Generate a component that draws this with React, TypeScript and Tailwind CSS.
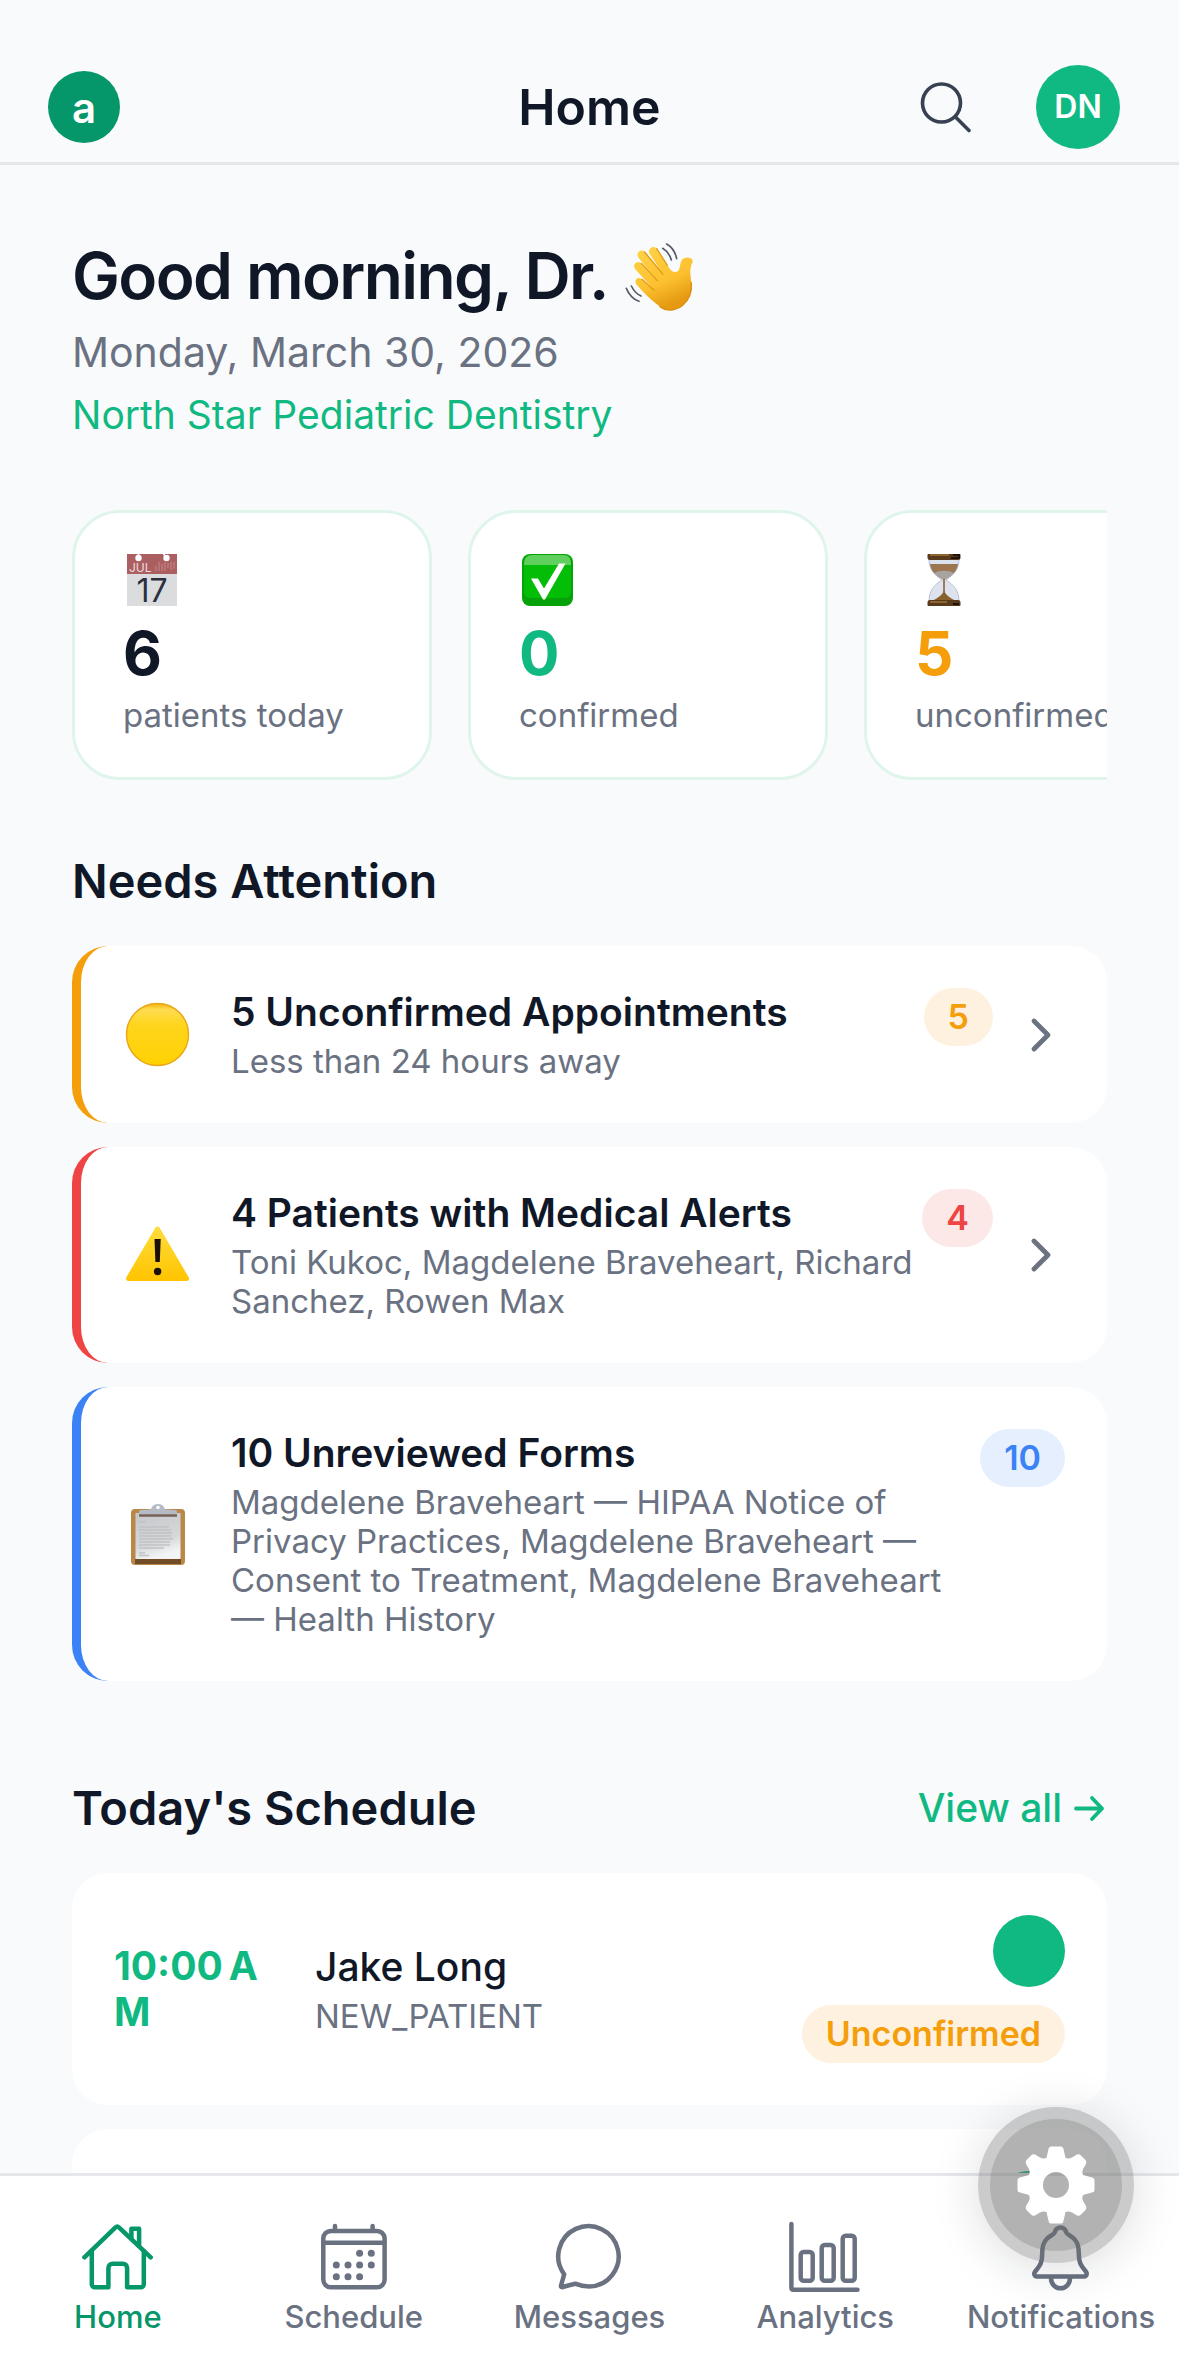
import type { ReactNode } from 'react'

function WaveIcon() {
  return (
    <svg viewBox="36 30 216 216" className="size-[72px]" aria-hidden="true">
      <defs>
        <linearGradient id="skin" x1="0" y1="0" x2="0.4" y2="1">
          <stop offset="0" stopColor="#ffd54a" />
          <stop offset="0.65" stopColor="#fcc02e" />
          <stop offset="1" stopColor="#e59a12" />
        </linearGradient>
      </defs>
      <path
        d="M112 70C106 54 126 44 134 56L170 112C177 124 186 129 195 125C204 121 203 106 207 95C211 82 228 79 238 86C246 92 240 100 237 108C233 122 236 140 238 158C240 184 234 208 212 226C192 242 166 246 144 230C120 212 96 190 74 164C64 150 78 138 90 148L124 178L70 118C58 104 76 88 88 100L134 150L80 84C68 68 88 54 98 66L148 126Z"
        fill="url(#skin)"
      />
      <path d="M98 66L153 133M134 56L166 106M88 100L136 152M90 148L126 181" fill="none" stroke="#e39a1a" strokeWidth="4" strokeLinecap="round" />
      <path d="M238 158C240 184 234 208 212 226C192 242 166 246 144 230" fill="none" stroke="#dc8d10" strokeWidth="4" strokeLinecap="round" />
      <path d="M164 42C178 50 190 66 194 86M152 55C164 62 174 76 178 90M58 168C64 180 74 192 87 198M43 175C50 192 64 208 81 214" fill="none" stroke="#555b66" strokeWidth="5" strokeLinecap="round" />
    </svg>
  )
}

function CalendarEmoji() {
  return (
    <svg viewBox="-1 1 54 52" className="h-[52px] w-[54px]" aria-hidden="true">
      <path d="M3 0H54V54H3Z" fill="#dbdcde" />
      <path d="M3 0H54V21H3Z" fill="#ab5f60" />
      <circle cx="14.500" cy="5" r="3.200" fill="#fff" />
      <circle cx="42.500" cy="5" r="3.200" fill="#fff" />
      <path d="M14.500 0V4M39 0L42.500 5" stroke="#fff" strokeWidth="1.600" />
      <text x="5" y="19" fontSize="12" fill="#eedddd" fontFamily="Inter, sans-serif">JUL</text>
      <path d="M32 13v5M35 9v9M38 11v7M41 9v9M44 10v5M47 9v8M50 9v7" stroke="#c08383" strokeWidth="1.200" />
      <text x="28" y="48.500" textAnchor="middle" fontSize="32" fill="#2b3040" fontFamily="Inter, sans-serif">17</text>
    </svg>
  )
}

function CheckEmoji() {
  return (
    <svg viewBox="-1 1 54 52" className="h-[52px] w-[54px]" aria-hidden="true">
      <rect x="2" y="1" width="51" height="52" rx="8" fill="#07a10a" />
      <rect x="4" y="2" width="47" height="43" rx="6" fill="#03bd06" />
      <path d="M4 12C4 5 7 2 13 2H43C49 2 51 6 51 12Z" fill="#5fcf5d" />
      <path d="M11 25.500H18L24 35.500L39 10.500H45.500L25 46.500H23Z" fill="#fff" />
    </svg>
  )
}

function HourglassEmoji() {
  return (
    <svg viewBox="-2 1 54 52" className="h-[52px] w-[54px]" aria-hidden="true">
      <path d="M12 6H42C42 17 37 21 29 27C37 32 42 38 42 48H12C12 38 17 32 25 27C17 21 12 17 12 6Z" fill="#dde3ee" stroke="#b9c2d3" strokeWidth="1" />
      <path d="M13 11H41C40 18 36 22 28 26.500H26C18 22 14 18 13 11Z" fill="#9b7650" />
      <path d="M17 20C20 23 24 25 27 27C31 25 34 23 37 20C32 17 22 17 17 20Z" fill="#a9a3a0" />
      <path d="M27 26V42" stroke="#8a6238" strokeWidth="1.600" />
      <path d="M14 48C20 46 25 42 27 38C29 42 34 46 40 48Z" fill="#8a6030" />
      <rect x="10.500" y="0" width="33" height="7" rx="2.500" fill="#5a3a1c" />
      <rect x="10.500" y="47" width="33" height="7" rx="2.500" fill="#5a3a1c" />
      <path d="M13 2H32M13 49H30" stroke="#a3713a" strokeWidth="1.500" />
      <path d="M36 2H42V5H34M36 51H42" stroke="#1f1209" strokeWidth="2" fill="none" />
    </svg>
  )
}

function YellowCircle() {
  return (
    <svg viewBox="0 0 72 72" className="size-[72px] shrink-0" aria-hidden="true">
      <defs>
        <linearGradient id="sun" x1="0" y1="0" x2="0" y2="1">
          <stop offset="0" stopColor="#f2b40c" />
          <stop offset="0.1" stopColor="#ffdc50" />
          <stop offset="0.35" stopColor="#ffd51c" />
          <stop offset="1" stopColor="#ffd103" />
        </linearGradient>
      </defs>
      <circle cx="34.500" cy="35.500" r="31" fill="url(#sun)" stroke="#e9a616" strokeWidth="1.400" />
    </svg>
  )
}

function WarningEmoji() {
  return (
    <svg viewBox="0 0 72 72" className="size-[72px] shrink-0" aria-hidden="true">
      <defs>
        <linearGradient id="warn" x1="0" y1="0" x2="0" y2="1">
          <stop offset="0" stopColor="#ffdd3c" />
          <stop offset="1" stopColor="#ffc400" />
        </linearGradient>
      </defs>
      <path d="M32.500 8.500C33.500 7 35.500 7 36.500 8.500L65.500 58C67 60.500 65.500 62 63.500 62H5.500C3.500 62 2.500 60.500 3.500 58Z" fill="url(#warn)" />
      <path d="M31.500 20H37.700L36.800 43H32.400Z" fill="#1a1005" />
      <circle cx="34.600" cy="52.500" r="3.700" fill="#1a1005" />
    </svg>
  )
}

function ClipboardEmoji() {
  return (
    <svg viewBox="0 0 72 72" className="size-[72px] shrink-0" aria-hidden="true">
      <defs>
        <linearGradient id="paper" x1="0" y1="0" x2="0.3" y2="1">
          <stop offset="0" stopColor="#c6c7ca" />
          <stop offset="0.7" stopColor="#d6d7d9" />
          <stop offset="1" stopColor="#f2f3f4" />
        </linearGradient>
      </defs>
      <rect x="8" y="11" width="54" height="56" rx="4" fill="#b98748" />
      <path d="M12 61H58V66H12Z" fill="#724c26" />
      <rect x="12.500" y="15" width="45" height="46" fill="url(#paper)" />
      <path d="M16 16V14C16 12.500 17 12 19 12L27 11.500C29 11 29 6 35 6C41 6 41 11 43 11.500L51 12C53 12 54 12.500 54 14V16Z" fill="#b5bac4" />
      <circle cx="35" cy="9.500" r="1.800" fill="#fff" />
      <path d="M16 17.500H54" stroke="#775f57" strokeWidth="2.400" />
      <path d="M16 24H23M16 29H46M16 32H48M16 35H49M16 38H48M16 41H50M16 44H47M16 47H47M16 50H41M16 55H22M16 57.500H26" stroke="#c0c2c5" strokeWidth="1.300" />
    </svg>
  )
}

function NavIcon({ children }: { children: ReactNode }) {
  return (
    <svg
      viewBox="0 0 72 72"
      className="size-[72px]"
      fill="none"
      stroke="currentColor"
      strokeWidth="4.500"
      strokeLinecap="round"
      strokeLinejoin="round"
      aria-hidden="true"
    >
      {children}
    </svg>
  )
}

const calendarDots = [
  [41.6, 32.3], [53.3, 32.3],
  [18.3, 44], [30, 44], [41.6, 44], [53.3, 44],
  [18.3, 55.7], [30, 55.7], [41.6, 55.7],
]

const tabs = [
  {
    label: 'Home',
    active: true,
    icon: (
      <NavIcon>
        <path d="M2.400 36.300L33.500 6.300Q35.200 4.700 36.900 6.300L68.700 36.300" />
        <path d="M9.800 30V63.300a3 3 0 0 0 3 3H26.400V47a4.300 4.300 0 0 1 4.300-4.300H40.800a4.300 4.300 0 0 1 4.300 4.300V66.300H58.800a3 3 0 0 0 3-3V30" />
        <path d="M49.400 17.500V7.700H57.100V25" />
      </NavIcon>
    ),
  },
  {
    label: 'Schedule',
    active: false,
    icon: (
      <NavIcon>
        <rect x="5.300" y="10" width="61.300" height="56.300" rx="7.500" />
        <path d="M17 5V9M54.600 5V9M5.300 21.700H66.600" />
        {calendarDots.map(([cx, cy]) => (
          <circle key={`${cx}-${cy}`} cx={cx} cy={cy} r="3.500" fill="currentColor" stroke="none" />
        ))}
      </NavIcon>
    ),
  },
  {
    label: 'Messages',
    active: false,
    icon: (
      <NavIcon>
        <path d="M22.200 62.700Q29 65.500 36.200 65.500A30.200 30.200 0 1 0 11.200 53.300L8 64.500Q7.600 66.600 9.600 66Z" />
      </NavIcon>
    ),
  },
  {
    label: 'Analytics',
    active: false,
    icon: (
      <NavIcon>
        <path d="M2.400 3V66.700Q2.400 68.700 4.400 68.700H68.500" />
        <rect x="11.700" y="31" width="12" height="28.700" rx="3" />
        <rect x="32.700" y="24" width="12" height="35.700" rx="3" />
        <rect x="53.700" y="14.700" width="12" height="45" rx="3" />
      </NavIcon>
    ),
  },
  {
    label: 'Notifications',
    active: false,
    icon: (
      <NavIcon>
        <path d="M35.500 6.500C32 6.500 30.500 8.500 29.700 11.500C29 14 24 14.500 20.500 19.500C17.500 23.500 17.200 27 17.200 32C17.200 42 15 44.500 10.500 50C8 53 9.500 55.600 13 55.600H58C61.500 55.600 63 53 60.500 50C56 44.500 53.800 42 53.800 32C53.800 27 53.500 23.500 50.500 19.500C47 14.500 42 14 41.300 11.500C40.500 8.500 39 6.500 35.500 6.500Z" />
        <path d="M26 57C26 63 30 67.300 35.500 67.300C41 67.300 45 63 45 57" />
      </NavIcon>
    ),
  },
]

const stats = [
  { icon: <CalendarEmoji />, value: 6, label: 'patients today', color: 'text-gray-900' },
  { icon: <CheckEmoji />, value: 0, label: 'confirmed', color: 'text-[#10b981]' },
  { icon: <HourglassEmoji />, value: 5, label: 'unconfirmed', color: 'text-[#f59e0b]' },
]

const alerts = [
  {
    icon: <YellowCircle />,
    title: '5 Unconfirmed Appointments',
    text: 'Less than 24 hours away',
    count: 5,
    border: 'border-[#f59e0b]',
    badge: 'bg-[#fef1e0] text-[#f59e0b]',
    chevron: true,
  },
  {
    icon: <WarningEmoji />,
    title: '4 Patients with Medical Alerts',
    text: 'Toni Kukoc, Magdelene Braveheart, Richard Sanchez, Rowen Max',
    count: 4,
    border: 'border-[#ef4444]',
    badge: 'bg-[#fde8e8] text-[#ef4444]',
    chevron: true,
  },
  {
    icon: <ClipboardEmoji />,
    title: '10 Unreviewed Forms',
    text: 'Magdelene Braveheart — HIPAA Notice of Privacy Practices, Magdelene Braveheart — Consent to Treatment, Magdelene Braveheart — Health History',
    count: 10,
    border: 'border-[#3b82f6]',
    badge: 'bg-[#e6effe] text-[#3b82f6]',
    chevron: false,
  },
]

const appointments = [
  { time: '10:00\u2009AM', name: 'Jake Long', type: 'NEW_PATIENT', status: 'Unconfirmed' },
  { time: '11:00\u2009AM', name: 'Toni Kukoc', type: 'NEW_PATIENT', status: 'Unconfirmed' },
]

export default function App() {
  return (
    <div className="relative flex h-screen flex-col overflow-hidden bg-[#f9fafc] font-['Inter',sans-serif] text-gray-900">
      <header className="grid grid-cols-[1fr_auto_1fr] items-center border-b-3 border-[#e5e7eb] px-12 pt-[65px] pb-[13px]">
        <div className="flex size-[72px] items-center justify-center rounded-full bg-[#059669] text-[42px] font-semibold text-white">a</div>
        <h1 className="text-[50px] leading-[60px] font-semibold">Home</h1>
        <div className="flex items-center justify-end gap-[60px] pr-[11px]">
          <button type="button" aria-label="Search">
            <svg viewBox="0 0 60 60" className="size-[60px]" fill="none" stroke="#374151" strokeWidth="3.600" strokeLinecap="round" aria-hidden="true">
              <circle cx="25.500" cy="26" r="19" />
              <path d="M39.500 40L53 53.500" />
            </svg>
          </button>
          <button type="button" className="size-[84px] rounded-full bg-[#10b981] text-[32px] font-semibold text-white">DN</button>
        </div>
      </header>

      <main className="min-h-0 flex-1 overflow-hidden px-[72px] pt-[72px]">
        <section>
          <h2 className="flex items-center gap-4 text-[64px] leading-[78px] font-semibold tracking-tight">
            Good morning, Dr.
            <WaveIcon />
          </h2>
          <p className="mt-3 text-[41px] leading-[51px] text-gray-500">Monday, March 30, 2026</p>
          <p className="mt-3 text-[39px] leading-[50px] text-[#10b981]">North Star Pediatric Dentistry</p>
        </section>

        <section className="mt-[70px] flex gap-9 overflow-hidden">
          {stats.map((stat) => (
            <div key={stat.label} className="w-[360px] shrink-0 rounded-[48px] border-3 border-[#dff5ec] bg-white px-12 py-[41px]">
              {stat.icon}
              <p className={`mt-[11px] text-[60px] leading-[72px] font-bold ${stat.color}`}>{stat.value}</p>
              <p className="mt-[5px] text-[33px] leading-[42px] text-gray-500">{stat.label}</p>
            </div>
          ))}
        </section>

        <section className="mt-[72px]">
          <h3 className="text-[47px] leading-[58px] font-semibold">Needs Attention</h3>
          <div className="mt-9 space-y-6">
            {alerts.map((alert) => (
              <article key={alert.title} className={`flex items-center rounded-[36px] border-l-9 bg-white p-[42px] ${alert.border}`}>
                {alert.icon}
                <div className="ml-9 min-w-0 flex-1">
                  <h4 className="text-[39px] leading-[48px] font-semibold">{alert.title}</h4>
                  <p className="mt-[6px] text-[33px] leading-[39px] text-gray-500">{alert.text}</p>
                </div>
                <span className={`self-start rounded-full px-6 text-[34px] leading-[58px] font-semibold ${alert.badge}`}>{alert.count}</span>
                {alert.chevron && (
                  <button type="button" aria-label={`Open ${alert.title}`} className="ml-6">
                    <svg viewBox="0 0 48 48" className="size-12" fill="none" stroke="#6b7280" strokeWidth="4.800" strokeLinecap="round" strokeLinejoin="round" aria-hidden="true">
                      <path d="M17 10L31 24L17 38" />
                    </svg>
                  </button>
                )}
              </article>
            ))}
          </div>
        </section>

        <section className="mt-[98px]">
          <div className="flex items-center justify-between">
            <h3 className="text-[47px] leading-[58px] font-semibold">Today's Schedule</h3>
            <a href="#schedule" className="flex items-center gap-3 text-[39px] leading-[48px] font-medium text-[#10b981]">
              View all
              <svg viewBox="0 0 33 33" className="size-[33px]" fill="none" stroke="currentColor" strokeWidth="3.800" strokeLinecap="round" strokeLinejoin="round" aria-hidden="true">
                <path d="M2 16.500H28M18 6L28 16.500L18 27" />
              </svg>
            </a>
          </div>
          <div className="mt-9 space-y-6">
            {appointments.map((item) => (
              <article key={item.time} className="flex items-center rounded-[36px] bg-white p-[42px]">
                <p className="w-[165px] text-[39px] leading-[46px] font-bold break-all text-[#10b981]">{item.time}</p>
                <div className="ml-9 min-w-0 flex-1">
                  <h4 className="text-[39px] leading-[48px] font-medium">{item.name}</h4>
                  <p className="mt-[6px] text-[33px] leading-[39px] text-gray-500">{item.type}</p>
                </div>
                <div className="flex flex-col items-end gap-[18px]">
                  <div className="size-[72px] rounded-full bg-[#10b981]" />
                  <span className="rounded-full bg-[#fef1e0] px-6 text-[34px] leading-[58px] font-semibold text-[#f59e0b]">{item.status}</span>
                </div>
              </article>
            ))}
          </div>
        </section>
      </main>

      <nav className="grid grid-cols-5 border-t-3 border-[#e5e7eb] bg-white pt-[45px] pb-[37px]">
        {tabs.map((tab) => (
          <a key={tab.label} href={`#${tab.label.toLowerCase()}`} className={`flex flex-col items-center text-[31px] leading-[36px] font-medium ${tab.active ? 'text-[#059669]' : 'text-gray-500'}`}>
            {tab.icon}
            <span className="mt-[6px]">{tab.label}</span>
          </a>
        ))}
      </nav>

      <button
        type="button"
        aria-label="Settings"
        className="absolute right-[45px] bottom-[109px] flex size-[156px] items-center justify-center rounded-full bg-[#696969]/35 shadow-[0_6px_48px_rgba(17,24,39,0.15)]"
      >
        <span className="flex size-[132px] items-center justify-center rounded-full bg-[#696969]/25">
          <svg viewBox="-40 -40 80 80" className="size-20" fill="#fff" aria-hidden="true">
            <path
              fillRule="evenodd"
              d="M-5 -38.500H5Q7 -38.500 7.500 -36L9.500 -27Q13 -26 16 -27.500L21 -30.500Q23 -31.500 25 -29.500L29.500 -25Q31 -23 30 -21L27 -16Q25.500 -13 27 -10L36 -7.500Q38.500 -7 38.500 -5V5Q38.500 7 36 7.500L27 10Q25.500 13 27 16L30 21Q31 23 29.500 25L25 29.500Q23 31.500 21 30.500L16 27.500Q13 26 9.500 27L7.500 36Q7 38.500 5 38.500H-5Q-7 38.500 -7.500 36L-9.500 27Q-13 26 -16 27.500L-21 30.500Q-23 31.500 -25 29.500L-29.500 25Q-31 23 -30 21L-27 16Q-25.500 13 -27 10L-36 7.500Q-38.500 7 -38.500 5V-5Q-38.500 -7 -36 -7.500L-27 -10Q-25.500 -13 -27 -16L-30 -21Q-31 -23 -29.500 -25L-25 -29.500Q-23 -31.500 -21 -30.500L-16 -27.500Q-13 -26 -9.500 -27L-7.500 -36Q-7 -38.500 -5 -38.500ZM0 -13A13 13 0 1 0 0 13A13 13 0 1 0 0 -13Z"
            />
          </svg>
        </span>
      </button>
    </div>
  )
}
